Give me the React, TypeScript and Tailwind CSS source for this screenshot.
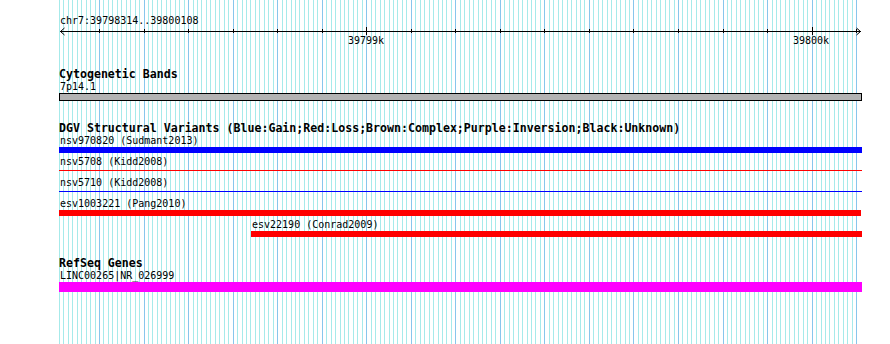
import React from 'react';

// ruler scale, measured in page pixels
const TICK0 = 99;
const TICK_STEP = 44.54;
const MINOR_STEP = TICK_STEP / 10;

const px = (x: number) => Math.round(x) + 0.5;

const GridBackground: React.FC = () => {
  const minor: number[] = [];
  for (let m = -9; m < 170; m++) {
    if (m % 10 === 0) continue;
    minor.push(TICK0 + m * MINOR_STEP);
  }
  const major: number[] = [];
  for (let n = 0; n <= 17; n++) major.push(TICK0 + n * TICK_STEP);

  return (
    <svg className="absolute inset-0" width={890} height={344} shapeRendering="crispEdges">
      {minor.map((x) => (
        <line key={'m' + x} x1={px(x)} x2={px(x)} y1={0} y2={344} stroke="#a6eaea" />
      ))}
      {major.map((x) => (
        <line key={'M' + x} x1={px(x)} x2={px(x)} y1={0} y2={344} stroke="#88c6ec" />
      ))}
    </svg>
  );
};

const Ruler: React.FC = () => {
  const ticks: number[] = [];
  for (let n = 0; n <= 17; n++) ticks.push(TICK0 + n * TICK_STEP);

  return (
    <div>
      <div className="ml-[60px] h-[13px] text-[10px] leading-[13px]">chr7:39798314..39800108</div>
      <svg width={890} height={7} className="block overflow-visible" shapeRendering="crispEdges">
        <line x1={60} x2={861} y1={4.5} y2={4.5} stroke="#000" />
        {ticks.map((x, i) => {
          const big = i === 6 || i === 16;
          return <line key={x} x1={px(x)} x2={px(x)} y1={big ? 0 : 2} y2={big ? 8 : 6} stroke="#000" />;
        })}
        <polyline points="64.5,1 60.5,4.5 64.5,8" fill="none" stroke="#000" shapeRendering="auto" />
        <polyline points="856.5,1 860.5,4.5 856.5,8" fill="none" stroke="#000" shapeRendering="auto" />
      </svg>
      <div className="relative h-[13px] text-[10px] leading-[13px]">
        <span className="absolute left-[366px] -translate-x-1/2">39799k</span>
        <span className="absolute left-[811px] -translate-x-1/2">39800k</span>
      </div>
    </div>
  );
};

const TrackTitle: React.FC<{ children: React.ReactNode }> = ({ children }) => (
  <div className="h-[12px] whitespace-nowrap text-[11.6px] font-bold leading-[12px]">{children}</div>
);

const Label: React.FC<{ children: React.ReactNode; className?: string }> = ({ children, className = '' }) => (
  <div className={`h-[13px] whitespace-nowrap pl-px text-[10px] leading-[13px] ${className}`}>{children}</div>
);

type Variant = {
  label: string;
  kind: 'bar' | 'line';
  color: string;
  offset?: string;
  width: string;
};

const variants: Variant[] = [
  { label: 'nsv970820 (Sudmant2013)', kind: 'bar', color: 'bg-[#0000ff]', width: 'w-[803px]' },
  { label: 'nsv5708 (Kidd2008)', kind: 'line', color: 'bg-[#ff0000]', width: 'w-[803px]' },
  { label: 'nsv5710 (Kidd2008)', kind: 'line', color: 'bg-[#0000ff]', width: 'w-[803px]' },
  { label: 'esv1003221 (Pang2010)', kind: 'bar', color: 'bg-[#ff0000]', width: 'w-[802px]' },
  { label: 'esv22190 (Conrad2009)', kind: 'bar', color: 'bg-[#ff0000]', offset: 'ml-[192px]', width: 'w-[611px]' },
];

const VariantRow: React.FC<{ v: Variant }> = ({ v }) => (
  <div className={`mb-[2px] ${v.offset ?? ''}`}>
    <Label className="pl-0">{v.label}</Label>
    {v.kind === 'bar' ? (
      <div className={`h-[6px] ${v.width} ${v.color}`} />
    ) : (
      <div className={`h-[6px] ${v.width} pt-[2px]`}>
        <div className={`h-px ${v.color}`} />
      </div>
    )}
  </div>
);

const App: React.FC = () => {
  return (
    <div className="relative h-[344px] w-[890px] overflow-hidden bg-white font-['DejaVu_Sans_Mono',monospace] text-black">
      <GridBackground />

      <div className="relative pt-[14px]">
        <Ruler />

        <div className="ml-[59px] w-[803px]">
          <section className="mt-[21px]">
            <TrackTitle>Cytogenetic Bands</TrackTitle>
            <Label>7p14.1</Label>
            <div className="h-[8px] border border-black bg-[#b3b3b3]" />
          </section>

          <section className="mt-[21px]">
            <TrackTitle>
              DGV Structural Variants (Blue:Gain;Red:Loss;Brown:Complex;Purple:Inversion;Black:Unknown)
            </TrackTitle>
            {variants.map((v) => (
              <VariantRow key={v.label} v={v} />
            ))}
          </section>

          <section className="mt-[20px]">
            <TrackTitle>RefSeq Genes</TrackTitle>
            <Label>LINC00265|NR_026999</Label>
            <div className="h-[10px] bg-[#ff00ff]" />
          </section>
        </div>
      </div>
    </div>
  );
};

export default App;
